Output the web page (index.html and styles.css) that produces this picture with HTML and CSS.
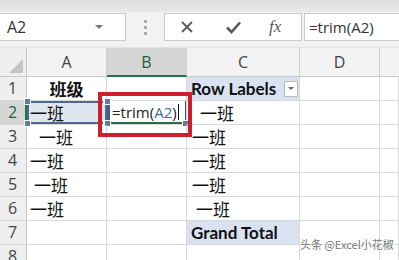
FILE: index.html
```html
<html>
<head>
<link rel="stylesheet" href="styles.css">
</head>
<body>
<div class="app">
  <div class="toolbar">
    <div class="namebox">
      <span class="namebox-text">A2</span>
      <span class="namebox-arrow"></span>
    </div>
    <div class="grip"><i></i><i></i><i></i></div>
    <div class="fnbox">
      <svg class="fn-icon" width="16" height="16" viewBox="0 0 16 16"><path d="M3 3 L13 13 M13 3 L3 13" stroke="#5a5a5a" stroke-width="1.8" fill="none"/></svg>
      <svg class="fn-icon" width="18" height="16" viewBox="0 0 18 16"><path d="M2 8.5 L6.5 13 L15 3.5" stroke="#5a5a5a" stroke-width="2.6" fill="none"/></svg>
      <span class="fx">fx</span>
    </div>
    <div class="formula">=trim(A2)</div>
  </div>

  <div class="sheet">
    <div class="corner"><span class="corner-tri"></span></div>
    <div class="colhead">A</div>
    <div class="colhead selected">B</div>
    <div class="colhead">C</div>
    <div class="colhead">D</div>
    <div class="colhead last"></div>

    <div class="rowhead">1</div>
    <div class="cell center bold">班级</div>
    <div class="cell"></div>
    <div class="cell pivot-head"><span>Row Labels</span><span class="pivot-btn"><span class="pivot-arrow"></span></span></div>
    <div class="cell"></div>
    <div class="cell"></div>

    <div class="rowhead selected">2</div>
    <div class="cell ref">一班<i class="h tl"></i><i class="h tr"></i><i class="h bl"></i><i class="h br"></i></div>
    <div class="cell active">=trim(<span class="refword">A2</span>)<span class="caret"></span><i class="h tl"></i><i class="h bl"></i><i class="h br"></i></div>
    <div class="cell pivot ind2">一班</div>
    <div class="cell"></div>
    <div class="cell"></div>

    <div class="rowhead">3</div>
    <div class="cell ind2">一班</div>
    <div class="cell"></div>
    <div class="cell pivot">一班</div>
    <div class="cell"></div>
    <div class="cell"></div>

    <div class="rowhead">4</div>
    <div class="cell">一班</div>
    <div class="cell"></div>
    <div class="cell pivot">一班</div>
    <div class="cell"></div>
    <div class="cell"></div>

    <div class="rowhead">5</div>
    <div class="cell ind1">一班</div>
    <div class="cell"></div>
    <div class="cell pivot">一班</div>
    <div class="cell"></div>
    <div class="cell"></div>

    <div class="rowhead">6</div>
    <div class="cell">一班</div>
    <div class="cell"></div>
    <div class="cell pivot ind1">一班</div>
    <div class="cell"></div>
    <div class="cell"></div>

    <div class="rowhead">7</div>
    <div class="cell"></div>
    <div class="cell"></div>
    <div class="cell pivot-total">Grand Total</div>
    <div class="cell"></div>
    <div class="cell"></div>

    <div class="rowhead">8</div>
    <div class="cell"></div>
    <div class="cell"></div>
    <div class="cell"></div>
    <div class="cell"></div>
    <div class="cell"></div>

    <div class="highlight"></div>
    <div class="watermark">头条 @Excel小花椒</div>
  </div>
</div>
</body>
</html>
```

FILE: styles.css
```css
body {
  margin: 0;
  width: 399px;
  height: 260px;
  overflow: hidden;
  background: #fff;
  font-family: "Open Sans", "Noto Sans CJK SC", sans-serif;
}

.app {
  width: 399px;
}

/* formula bar */
.toolbar {
  height: 48px;
  box-sizing: border-box;
  padding-top: 13px;
  background: linear-gradient(#dedede 0, #e9e9e9 12px, #f2f2f2 12px, #f2f2f2 100%);
  display: flex;
  align-items: flex-start;
  border-bottom: 1px solid #e2e2e2;
}

.namebox {
  width: 126px;
  height: 28px;
  box-sizing: border-box;
  background: #fff;
  border: 1px solid #c8c8c8;
  border-left: none;
  display: flex;
  align-items: center;
  justify-content: space-between;
  padding: 0 22px 0 7px;
}

.namebox-text {
  font-size: 16px;
  color: #333;
}

.namebox-arrow {
  width: 0;
  height: 0;
  border-left: 4px solid transparent;
  border-right: 4px solid transparent;
  border-top: 4px solid #777;
}

.grip {
  width: 38px;
  height: 28px;
  display: flex;
  flex-direction: column;
  align-items: center;
  justify-content: center;
  gap: 3px;
}

.grip i {
  width: 3px;
  height: 3px;
  background: #aaa;
}

.fnbox {
  width: 138px;
  height: 28px;
  box-sizing: border-box;
  background: #fff;
  border: 1px solid #c8c8c8;
  display: flex;
  align-items: center;
  padding-left: 14px;
}

.fn-icon {
  margin-right: 30px;
}

.fnbox .fn-icon + .fn-icon {
  margin-right: 26px;
}

.fx {
  font-family: "Liberation Serif", serif;
  font-style: italic;
  font-size: 17px;
  color: #5a5a5a;
}

.formula {
  flex: 1;
  height: 28px;
  box-sizing: border-box;
  margin-left: 2px;
  background: #fff;
  border: 1px solid #c8c8c8;
  border-right: none;
  font-size: 15px;
  color: #333;
  padding: 3px 0 0 4px;
}

/* sheet */
.sheet {
  position: relative;
  display: grid;
  grid-template-columns: 27px 80px 80px 113px 80px 19px;
  grid-template-rows: 29px repeat(8, 24px);
  background: #fff;
}

.corner {
  position: relative;
  background: #efefef;
  border-right: 1px solid #c9c9c9;
  border-bottom: 1px solid #c9c9c9;
}

.corner-tri {
  position: absolute;
  right: 3px;
  bottom: 3px;
  width: 0;
  height: 0;
  border-left: 14px solid transparent;
  border-bottom: 14px solid #c4c4c4;
}

.colhead {
  background: #f3f3f3;
  border-right: 1px solid #d0d0d0;
  border-bottom: 1px solid #c9c9c9;
  text-align: center;
  font-size: 16px;
  line-height: 28px;
  color: #444;
}

.colhead.selected {
  background: #d6d6d6;
  border-bottom: 2px solid #217346;
  color: #1f5e3a;
}

.colhead.last {
  border-right: none;
}

.rowhead {
  background: #efefef;
  border-right: 1px solid #c9c9c9;
  border-bottom: 1px solid #d6d6d6;
  font-size: 16px;
  line-height: 23px;
  color: #444;
  padding-left: 8px;
}

.rowhead.selected {
  background: #d6d6d6;
  border-right: 2px solid #217346;
  color: #1f5e3a;
}

.cell {
  position: relative;
  border-right: 1px solid #d9d9d9;
  border-bottom: 1px solid #d9d9d9;
  font-family: "Noto Sans CJK SC", sans-serif;
  font-size: 17px;
  line-height: 23px;
  color: #111;
  padding-left: 3px;
  white-space: nowrap;
}

.center {
  text-align: center;
  padding-left: 0;
}

.bold {
  font-weight: bold;
}

.ind1 {
  padding-left: 7px;
}

.ind2 {
  padding-left: 12px;
}

/* formula reference and active cell */
.ref {
  background: #dfe6f0;
  box-shadow: inset 0 0 0 2px #4a6a90;
  border-right: none;
}

.active {
  font-family: "Open Sans", sans-serif;
  font-size: 15px;
  color: #222;
  padding-left: 5px;
  box-shadow: inset 0 -2px 0 #2f6b47, inset 3px 0 0 #3d5f82, inset -1px 0 0 #2f6b47;
}

.refword {
  color: #3b6ea5;
}

.caret {
  display: inline-block;
  width: 1px;
  height: 16px;
  background: #111;
  vertical-align: -2px;
  margin-left: 1px;
}

.h {
  position: absolute;
  width: 5px;
  height: 5px;
  background: #5d7ea3;
  border: 1px solid #fff;
}

.h.tl { left: -3px; top: -3px; }
.h.tr { right: -3px; top: -3px; }
.h.bl { left: -3px; bottom: -3px; }
.h.br { right: -3px; bottom: -3px; }

/* pivot table */
.pivot-head,
.pivot-total {
  background: #dae2f1;
  font-family: "Lato", sans-serif;
  font-weight: bold;
  font-size: 17px;
  padding-left: 4px;
}

.pivot-head {
  display: flex;
  align-items: center;
  justify-content: space-between;
  padding-right: 1px;
}

.pivot-btn {
  width: 14px;
  height: 16px;
  box-sizing: border-box;
  background: #fff;
  border: 1px solid #b9b9b9;
  display: flex;
  align-items: center;
  justify-content: center;
}

.pivot-arrow {
  width: 0;
  height: 0;
  border-left: 3px solid transparent;
  border-right: 3px solid transparent;
  border-top: 3px solid #666;
}

.pivot {
  padding-left: 5px;
}

.pivot.ind1 {
  padding-left: 9px;
}

.pivot.ind2 {
  padding-left: 13px;
}

/* annotation over the sheet */
.highlight {
  position: absolute;
  left: 98px;
  top: 44px;
  width: 86px;
  height: 37px;
  border: 4px solid #cf1f2e;
}

.watermark {
  position: absolute;
  left: 300px;
  top: 189px;
  font-family: "Noto Sans CJK SC", sans-serif;
  font-size: 11px;
  line-height: 14px;
  color: #777;
  white-space: nowrap;
  text-shadow: 0 0 2px #fff, 0 0 2px #fff;
}
```
